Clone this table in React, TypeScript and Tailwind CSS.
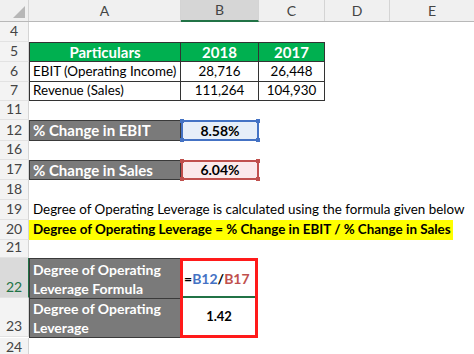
const COLS = { n: "w-[29px]", a: "w-[152px]", b: "w-[78px]", c: "w-[66px]", d: "w-[65px]", e: "w-[84px]" };

const RowNum = ({ n, h, active }: { n: string; h: string; active?: boolean }) => (
  <div
    className={`${COLS.n} ${h} shrink-0 flex items-end justify-center pb-[3px] border-r text-[14px] ${
      active ? "bg-[#dadada] text-[#217346] border-r-[#217346]" : "bg-[#f3f3f3] text-[#444] border-r-[#d4d4d4]"
    } border-b border-b-[#e2e2e2]`}
  >
    {n}
  </div>
);

const Row = ({ n, h, active, children }: { n: string; h: string; active?: boolean; children?: React.ReactNode }) => (
  <div className={`flex ${h} whitespace-nowrap`}>
    <RowNum n={n} h={h} active={active} />
    {children}
  </div>
);

const Handles = ({ color }: { color: string }) => (
  <>
    <span className={`absolute -left-[3px] -top-[3px] w-[4px] h-[4px] ${color}`} />
    <span className={`absolute -right-[3px] -top-[3px] w-[4px] h-[4px] ${color}`} />
    <span className={`absolute -left-[3px] -bottom-[3px] w-[4px] h-[4px] ${color}`} />
    <span className={`absolute -right-[3px] -bottom-[3px] w-[4px] h-[4px] ${color}`} />
  </>
);

export default function App() {
  return (
    <div className="w-[474px] h-[354px] overflow-hidden bg-white text-[13.4px] leading-none text-black" style={{ fontFamily: "Lato, 'Open Sans', sans-serif" }}>
      {/* column headers */}
      <div className="flex h-[22px] bg-[#f0f0f0] border-b border-[#b8b8b8] text-[#444] text-[14px]">
        <div className={`${COLS.n} relative border-r border-[#d4d4d4]`}>
          <div className="absolute right-[3px] bottom-[3px] w-0 h-0 border-l-[12px] border-l-transparent border-b-[12px] border-b-[#b7b7b7]" />
        </div>
        <div className={`${COLS.a} flex items-center justify-center border-r border-[#d4d4d4]`}>A</div>
        <div className={`${COLS.b} flex items-center justify-center border-r border-[#d4d4d4] bg-[#d6d6d6] border-b-2 border-b-[#217346] -mb-[1px]`}>B</div>
        <div className={`${COLS.c} flex items-center justify-center border-r border-[#d4d4d4]`}>C</div>
        <div className={`${COLS.d} flex items-center justify-center border-r border-[#d4d4d4]`}>D</div>
        <div className={`${COLS.e} flex items-center justify-center`}>E</div>
      </div>

      <Row n="4" h="h-[20px]" />
      <Row n="5" h="h-[20px]">
        <div className="flex border border-[#333] bg-[#00b050] text-white font-bold text-[15px]">
          <div className="w-[151px] flex items-center justify-center border-r border-[#333]">Particulars</div>
          <div className={`${COLS.b} flex items-center justify-center border-r border-[#333]`}>2018</div>
          <div className="w-[65px] flex items-center justify-center">2017</div>
        </div>
      </Row>
      <Row n="6" h="h-[20px]">
        <div className="flex border-x border-b border-[#333]">
          <div className="w-[151px] flex items-center pl-[3px] border-r border-[#333]">EBIT (Operating Income)</div>
          <div className={`${COLS.b} flex items-center justify-center border-r border-[#333]`}>28,716</div>
          <div className="w-[65px] flex items-center justify-center">26,448</div>
        </div>
      </Row>
      <Row n="7" h="h-[19px]">
        <div className="flex border-x border-b border-[#333]">
          <div className="w-[151px] flex items-center pl-[3px] border-r border-[#333]">Revenue (Sales)</div>
          <div className={`${COLS.b} flex items-center justify-center border-r border-[#333]`}>111,264</div>
          <div className="w-[65px] flex items-center justify-center">104,930</div>
        </div>
      </Row>
      <Row n="11" h="h-[19px]" />
      <Row n="12" h="h-[21px]">
        <div className={`${COLS.a} flex items-center pl-[3px] bg-[#7a7a7a] border border-[#3a3a3a] text-white font-bold text-[15px]`}>% Change in EBIT</div>
        <div className={`${COLS.b} relative flex items-center justify-center bg-[#e6eef9] border-2 border-[#4472c4] font-bold text-[14px]`}>
          8.58%
          <Handles color="bg-[#4472c4]" />
        </div>
      </Row>
      <Row n="16" h="h-[19px]" />
      <Row n="17" h="h-[20px]">
        <div className={`${COLS.a} flex items-center pl-[3px] bg-[#7a7a7a] border border-[#3a3a3a] text-white font-bold text-[15px]`}>% Change in Sales</div>
        <div className={`${COLS.b} relative flex items-center justify-center bg-[#fbe9ea] border-2 border-[#c0504d] font-bold text-[14px]`}>
          6.04%
          <Handles color="bg-[#c0504d]" />
        </div>
      </Row>
      <Row n="18" h="h-[20px]" />
      <Row n="19" h="h-[20px]">
        <div className="flex items-center pl-[4px]">Degree of Operating Leverage is calculated using the formula given below</div>
      </Row>
      <Row n="20" h="h-[20px]">
        <div className="flex items-center pl-[4px] pr-[2px] bg-[#ffff00] font-bold">Degree of Operating Leverage = % Change in EBIT / % Change in Sales</div>
      </Row>
      <Row n="21" h="h-[18px]" />
      <div className="flex whitespace-nowrap">
        <div className="flex flex-col">
          <RowNum n="22" h="h-[40px]" active />
          <RowNum n="23" h="h-[39px]" />
        </div>
        <div className={`${COLS.a} flex flex-col bg-[#7a7a7a] border border-[#3a3a3a] text-white font-bold text-[14px] leading-[19px]`}>
          <div className="h-[40px] flex flex-col justify-center pl-[3px] border-b border-[#3a3a3a]">
            <span>Degree of Operating</span>
            <span>Leverage Formula</span>
          </div>
          <div className="flex-1 flex flex-col justify-center pl-[3px]">
            <span>Degree of Operating</span>
            <span>Leverage</span>
          </div>
        </div>
        <div className={`${COLS.b} flex flex-col border-[3px] border-[#ff1a1a] -ml-[1px] font-bold`}>
          <div className="h-[37px] flex items-center pl-[1px] border-b-2 border-[#217346] text-[14px]">
            <span>=</span>
            <span className="text-[#4472c4]">B12</span>
            <span>/</span>
            <span className="text-[#c0504d]">B17</span>
          </div>
          <div className="flex-1 flex items-center justify-center text-[13px]">1.42</div>
        </div>
      </div>
      <Row n="24" h="h-[20px]" />
    </div>
  );
}
